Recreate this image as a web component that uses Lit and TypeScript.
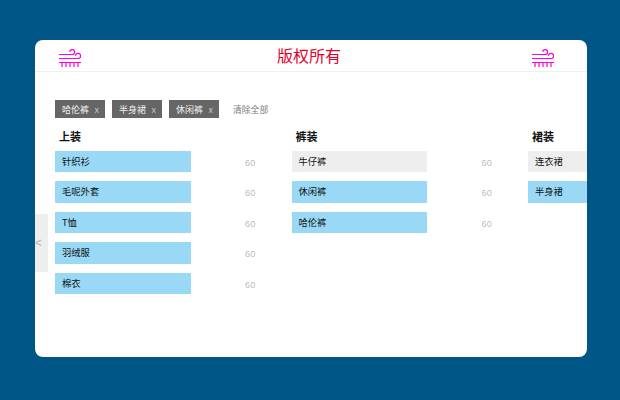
import { LitElement, html, css, svg } from "lit";
import { customElement } from "lit/decorators.js";

const wind = svg`<path d="M1 6.5H14.2a2.4 2.4 0 1 0-2.4-2.6" /><path d="M1 10.5H20a2.6 2.6 0 1 0-2.6-2.8" /><path d="M1 14.5H23" /><path d="M4 14.5V19M8 14.5V19M12 14.5V19M16 14.5V19M20 14.5V19" />`;

interface Item { name: string; on: boolean; }
const columns: { title: string; counts: boolean; items: Item[] }[] = [
  { title: "上装", counts: true, items: [
    { name: "针织衫", on: true }, { name: "毛呢外套", on: true }, { name: "T恤", on: true },
    { name: "羽绒服", on: true }, { name: "棉衣", on: true } ] },
  { title: "裤装", counts: true, items: [
    { name: "牛仔裤", on: false }, { name: "休闲裤", on: true }, { name: "哈伦裤", on: true } ] },
  { title: "裙装", counts: false, items: [
    { name: "连衣裙", on: false }, { name: "半身裙", on: true } ] },
];

@customElement("app-root")
export class AppRoot extends LitElement {
  static styles = css`
    :host {
      display: block; width: 620px; height: 400px; box-sizing: border-box;
      padding: 40px 33px 43px 35px; background: #005587;
      font-family: "Noto Sans CJK SC", "Liberation Sans", sans-serif;
    }
    .card {
      position: relative; height: 100%; background: #fff; border-radius: 8px;
      overflow: hidden; display: flex; flex-direction: column;
    }
    .head {
      height: 31px; flex: none; border-bottom: 1px solid #eeeeee;
      display: flex; align-items: center; justify-content: space-between;
      padding: 0 33px 0 23px;
    }
    .head svg {
      width: 23px; height: 20px; margin-top: 4px; fill: none;
      stroke: #ff00e0; stroke-width: 1.2;
    }
    .title { color: #e3002b; font-size: 16px; line-height: 31px; margin-left: 6px; }
    .tags {
      display: flex; align-items: center; gap: 7px;
      margin: 28px 0 0 20px; height: 18px;
    }
    .tag {
      display: flex; align-items: center; justify-content: space-between;
      box-sizing: border-box; width: 50px; height: 18px; padding: 0 6px 0 7px;
      background: #666; color: #f2f2f2; font-size: 9px;
    }
    .tag i { font-style: normal; color: #c4c4c4; font-size: 9px; }
    .clear { color: #777; font-size: 8.8px; margin-left: 7px; }
    .cols { display: flex; margin: 10px 0 0 20px; }
    .col { width: 236.5px; flex: none; }
    .col h3 {
      margin: 0 0 5.7px 4px; font-size: 11px; line-height: 17px; font-weight: 700; color: #111;
    }
    .rows { display: flex; flex-direction: column; gap: 9px; }
    .row { display: flex; align-items: center; height: 21.5px; }
    .name {
      box-sizing: border-box; width: 135.5px; height: 21.5px; padding-left: 7px;
      font-size: 9.3px; line-height: 21.5px; color: #111; background: #eeeeee; white-space: nowrap;
    }
    .name.on { background: #99d9f5; }
    .count { margin-left: 54.5px; margin-top: 3px; font-size: 9px; color: #bbb; font-family: "Liberation Sans", sans-serif; letter-spacing: 0.3px; }
    .handle {
      position: absolute; left: 0; top: 174px; width: 13px; height: 58px;
      background: #eeeeee; color: #b5b5b5; font-size: 12px; line-height: 58px;
      box-sizing: border-box; font-family: "Liberation Sans", sans-serif;
    }
  `;

  render() {
    return html`
      <div class="card">
        <div class="head">
          <svg viewBox="0 0 23 20">${wind}</svg>
          <span class="title">版权所有</span>
          <svg viewBox="0 0 23 20">${wind}</svg>
        </div>
        <div class="tags">
          ${["哈伦裤", "半身裙", "休闲裤"].map((t) => html`<span class="tag">${t}<i>x</i></span>`)}
          <span class="clear">清除全部</span>
        </div>
        <div class="cols">
          ${columns.map((c) => html`
            <div class="col">
              <h3>${c.title}</h3>
              <div class="rows">
                ${c.items.map((i) => html`
                  <div class="row">
                    <div class="name ${i.on ? "on" : ""}">${i.name}</div>
                    ${c.counts ? html`<span class="count">60</span>` : ""}
                  </div>`)}
              </div>
            </div>`)}
        </div>
        <div class="handle">&lt;</div>
      </div>
    `;
  }
}
